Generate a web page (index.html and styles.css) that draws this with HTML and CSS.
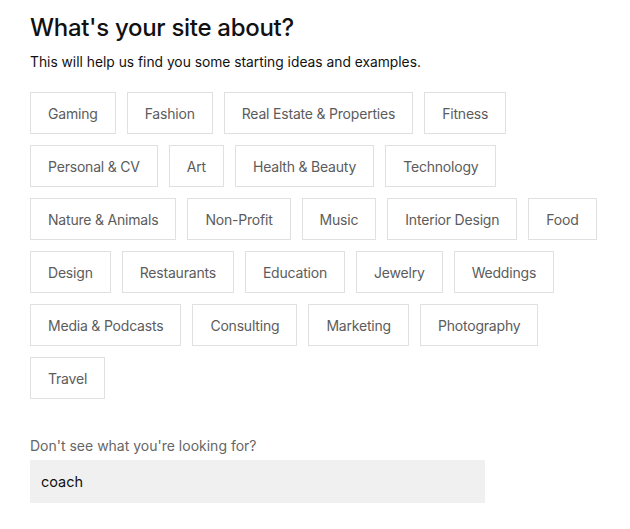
FILE: index.html
```html
<!DOCTYPE html>
<html lang="en">
<head>
    <meta charset="UTF-8">
    <meta name="viewport" content="width=device-width, initial-scale=1.0">
    <title>What's your site about?</title>
    <link rel="stylesheet" href="styles.css">
</head>
<body>
    <div class="page">
        <h1 class="title">What's your site about?</h1>
        <p class="subtitle">This will help us find you some starting ideas and examples.</p>
        <div class="topics">
            <button class="chip">Gaming</button>
            <button class="chip">Fashion</button>
            <button class="chip">Real Estate &amp; Properties</button>
            <button class="chip">Fitness</button>
            <button class="chip">Personal &amp; CV</button>
            <button class="chip">Art</button>
            <button class="chip">Health &amp; Beauty</button>
            <button class="chip">Technology</button>
            <button class="chip">Nature &amp; Animals</button>
            <button class="chip">Non-Profit</button>
            <button class="chip">Music</button>
            <button class="chip">Interior Design</button>
            <button class="chip">Food</button>
            <button class="chip">Design</button>
            <button class="chip">Restaurants</button>
            <button class="chip">Education</button>
            <button class="chip">Jewelry</button>
            <button class="chip">Weddings</button>
            <button class="chip">Media &amp; Podcasts</button>
            <button class="chip">Consulting</button>
            <button class="chip">Marketing</button>
            <button class="chip">Photography</button>
            <button class="chip">Travel</button>
        </div>
        <label class="other-label" for="other">Don't see what you're looking for?</label>
        <input class="other-input" id="other" type="text" value="coach">
    </div>
</body>
</html>
```

FILE: styles.css
```css
body {
    margin: 0;
    background: #fff;
    font-family: Inter, "Noto Sans", sans-serif;
    color: #111;
}

.page {
    width: 570px;
    padding: 13px 30px 0;
}

.title {
    margin: 0;
    font-size: 24px;
    font-weight: 500;
    line-height: 30px;
    letter-spacing: -0.3px;
}

.subtitle {
    margin: 9px 0 0;
    font-size: 13.8px;
    line-height: 20px;
}

.topics {
    display: flex;
    flex-wrap: wrap;
    gap: 11px;
    margin-top: 20px;
}

.chip {
    height: 42px;
    padding: 0 17px;
    background: #fff;
    border: 1px solid #e0e0e0;
    border-radius: 0;
    font-family: inherit;
    font-size: 14px;
    letter-spacing: -0.2px;
    color: #5c5c5c;
    cursor: pointer;
}

.chip:hover {
    border-color: #bbb;
}

.other-label {
    display: block;
    margin-top: 37px;
    font-size: 14px;
    line-height: 20px;
    color: #666;
}

.other-input {
    display: block;
    box-sizing: border-box;
    width: 455px;
    height: 43px;
    margin-top: 4px;
    padding: 0 11px;
    border: none;
    background: #f0f0f0;
    font-family: inherit;
    font-size: 14.5px;
    color: #111;
    outline: none;
}
```
